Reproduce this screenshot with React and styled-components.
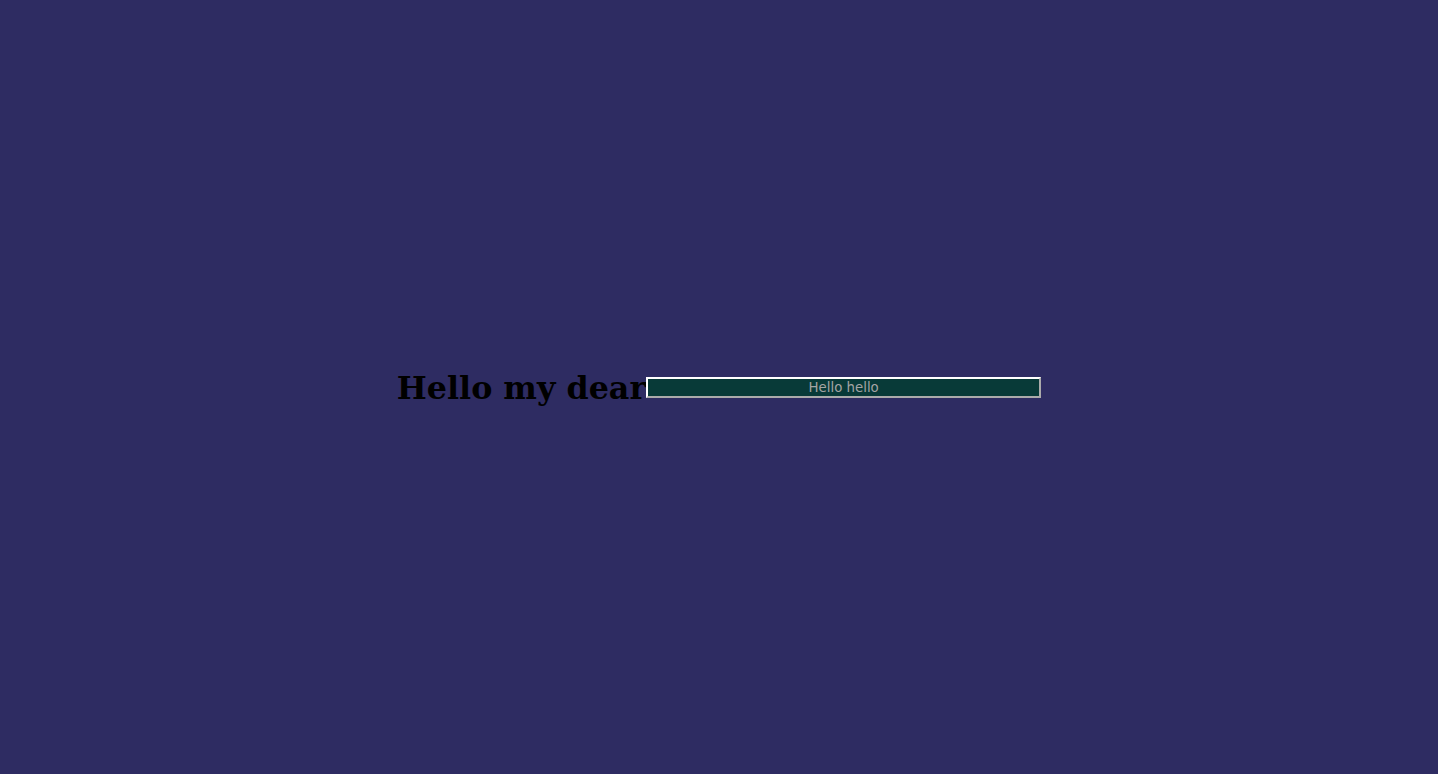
import React from "react";
import styled, { createGlobalStyle } from "styled-components";

const GlobalStyle = createGlobalStyle`
  html, body {
    margin: 0;
    padding: 0;
    background-color: #2e2c62;
  }

  ::-webkit-scrollbar {
    width: 13px;
    height: 5px;
    background-color: #cdcdcd;
  }

  ::-webkit-scrollbar:vertical {
    box-shadow: inset -1px 0 0 #3c3c3c;
  }

  ::-webkit-scrollbar-thumb {
    background-color: #808080;
    background-clip: padding-box;
    border-radius: 4px;
  }

  ::-webkit-scrollbar-thumb:vertical {
    border-left: 3px solid transparent;
    border-right: 3px solid transparent;
    border-radius: 0 0 4px 4px;
  }

  ::-webkit-scrollbar-thumb:horizontal {
    border-top: 3px solid transparent;
    border-radius: 0 4px 0 0;
  }

  ::-webkit-scrollbar-corner {
    background-color: #e6e6e6;
  }
`;

const Page = styled.div`
  display: flex;
  flex-direction: column;
`;

const Hero = styled.section`
  width: 100vw;
  height: 100vh;
  display: flex;
  align-items: center;
  justify-content: center;
`;

const Title = styled.h1`
  margin: 21px 0;
  font-family: "DejaVu Serif", serif;
  font-size: 31.75px;
  font-weight: bold;
  color: #000;
`;

const Field = styled.input`
  box-sizing: border-box;
  width: 395px;
  height: 21px;
  padding: 1px 2px;
  border: 2px outset #ffffff;
  background-color: #083a38;
  color: #a9a9a9;
  font-family: "DejaVu Sans", sans-serif;
  font-size: 13.33px;
  text-align: center;
  outline: none;

  &::placeholder {
    color: #a4a4a4;
  }
`;

const Below = styled.section`
  height: 887px;
`;

export default function App() {
  return (
    <>
      <GlobalStyle />
      <Page>
        <Hero>
          <Title>Hello my dear</Title>
          <Field placeholder="Hello hello" />
        </Hero>
        <Below />
      </Page>
    </>
  );
}
